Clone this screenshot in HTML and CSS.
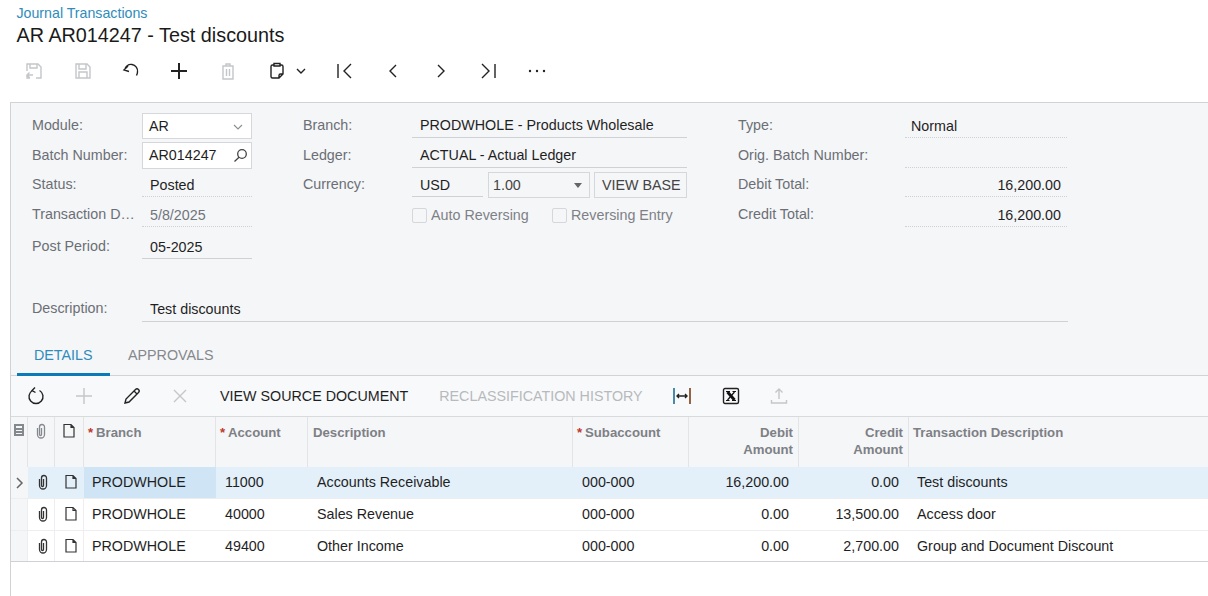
FILE: index.html
```html
<!DOCTYPE html>
<html lang="en">
<head>
<meta charset="utf-8">
<title>Journal Transactions</title>
<link rel="stylesheet" href="styles.css">
</head>
<body>
<header class="page-head">
  <a class="crumb">Journal Transactions</a>
  <h1 class="title">AR AR014247 - Test discounts</h1>
</header>
<nav class="toolbar">
  <span class="tool t1 off"><svg width="20" height="20" viewBox="0 0 20 20"><path d="M3 10V3h11l3 3v11h-5M6 3v4h7V3M3 14h6M5.500 11.500 3 14l2.500 2.500M3 14v3h3"/></svg></span>
  <span class="tool t2 off"><svg width="20" height="20" viewBox="0 0 20 20"><path d="M3 3h11l3 3v11H3zM6 3v5h7V3M6 17v-6h8v6"/></svg></span>
  <span class="tool t3"><svg width="20" height="20" viewBox="0 0 20 20"><path d="M7 5 3 9l5 1.500M3.500 9A6.500 6.500 0 0 1 16.500 11c0 1.500-.5 2.500-1 3.500"/></svg></span>
  <span class="tool t4"><svg width="20" height="20" viewBox="0 0 20 20"><path class="thick" d="M10 2v16M2 10h16"/></svg></span>
  <span class="tool t5 off"><svg width="20" height="20" viewBox="0 0 20 20"><path d="M5 5h10v13H5zM8 5V3h4v2M8.500 8v7M11.500 8v7"/></svg></span>
  <span class="tool t6"><svg width="20" height="20" viewBox="0 0 20 20"><path d="M6.500 4H5.500Q4 4 4 5.500v10Q4 17 5.500 17H12l4-4V5.500Q16 4 14.500 4h-1M7 2.500h6V5H7zM16 13h-2.500Q12 13 12 14.500V17"/></svg></span>
  <span class="tool t7"><svg width="12" height="12" viewBox="0 0 12 12"><path d="M2 4l4 4 4-4"/></svg></span>
  <span class="tool t8"><svg width="20" height="20" viewBox="0 0 20 20"><path d="M3 3v14M16 3l-7 7 7 7"/></svg></span>
  <span class="tool t9"><svg width="20" height="20" viewBox="0 0 20 20"><path d="M13 4l-6 6 6 6"/></svg></span>
  <span class="tool t10"><svg width="20" height="20" viewBox="0 0 20 20"><path d="M7 4l6 6-6 6"/></svg></span>
  <span class="tool t11"><svg width="20" height="20" viewBox="0 0 20 20"><path d="M3 3l7 7-7 7M16 3v14"/></svg></span>
  <span class="tool t12"><svg width="20" height="20" viewBox="0 0 20 20"><circle class="dot" cx="3" cy="10" r="1.200"/><circle class="dot" cx="10" cy="10" r="1.200"/><circle class="dot" cx="17" cy="10" r="1.200"/></svg></span>
</nav>
<main class="panel">
  <section class="form">
    <div class="col col-a">
      <div class="row r1"><span class="lbl">Module:</span><span class="box sel">AR<svg class="chev" width="10" height="10" viewBox="0 0 10 10"><path d="M1 3l4 4 4-4"/></svg></span></div>
      <div class="row r2"><span class="lbl">Batch Number:</span><span class="box sel">AR014247<svg class="mag" width="15" height="15" viewBox="0 0 15 15"><circle cx="9" cy="6" r="4.300"/><path d="M6 9.200 1.500 13.500"/></svg></span></div>
      <div class="row r3"><span class="lbl">Status:</span><span class="val dotted">Posted</span></div>
      <div class="row r4"><span class="lbl">Transaction D…</span><span class="val dotted muted">5/8/2025</span></div>
      <div class="row r5"><span class="lbl">Post Period:</span><span class="val line">05-2025</span></div>
    </div>
    <div class="col col-b">
      <div class="row r1"><span class="lbl">Branch:</span><span class="val line wide">PRODWHOLE - Products Wholesale</span></div>
      <div class="row r2"><span class="lbl">Ledger:</span><span class="val line wide">ACTUAL - Actual Ledger</span></div>
      <div class="row r3"><span class="lbl">Currency:</span>
        <div class="cur">
          <span class="val line usd">USD</span>
          <span class="box rate">1.00<i class="caret"></i></span>
          <span class="box btn">VIEW BASE</span>
        </div>
      </div>
      <div class="row r4"><span class="lbl"></span>
        <div class="checks">
          <label class="chk c-a"><i class="cb"></i>Auto Reversing</label>
          <label class="chk"><i class="cb"></i>Reversing Entry</label>
        </div>
      </div>
    </div>
    <div class="col col-c">
      <div class="row r1"><span class="lbl">Type:</span><span class="val dotted">Normal</span></div>
      <div class="row r2"><span class="lbl">Orig. Batch Number:</span><span class="val dotted"></span></div>
      <div class="row r3"><span class="lbl">Debit Total:</span><span class="val dotted num">16,200.00</span></div>
      <div class="row r4"><span class="lbl">Credit Total:</span><span class="val dotted num">16,200.00</span></div>
    </div>
  </section>
  <div class="desc"><span class="lbl">Description:</span><span class="val line">Test discounts</span></div>
  <div class="tabs"><span class="tab on">DETAILS</span><span class="tab">APPROVALS</span></div>
  <div class="gridbar">
    <span class="gt g1"><svg width="20" height="20" viewBox="0 0 20 20"><path d="M6.500 4.500A7 7 0 1 0 13.500 4.500M9 1.500l-3 3 3.500 2" /></svg></span>
    <span class="gt g2 off"><svg width="18" height="18" viewBox="0 0 18 18"><path d="M9 1v16M1 9h16"/></svg></span>
    <span class="gt g3"><svg width="18" height="18" viewBox="0 0 18 18"><path d="M2 16l1-4L12.500 2.500a1.500 1.500 0 0 1 3 3L6 15zM11 4l3 3"/></svg></span>
    <span class="gt g4 off"><svg width="16" height="16" viewBox="0 0 16 16"><path d="M2 2l12 12M14 2 2 14"/></svg></span>
    <span class="gbtn b1">VIEW SOURCE DOCUMENT</span>
    <span class="gbtn b2 dis">RECLASSIFICATION HISTORY</span>
    <span class="gt g5"><svg width="20" height="20" viewBox="0 0 20 20"><path class="blue" d="M2 2v16"/><path class="brown" d="M18 2v16"/><path d="M5 10h10M7 8l-2 2 2 2M13 8l2 2-2 2"/></svg></span>
    <span class="gt g6"><svg width="18" height="18" viewBox="0 0 18 18"><rect x="1.500" y="1.500" width="15" height="15" rx="1.500"/><path class="xthick" d="M5.500 5l7 8"/><path class="xthin" d="M12.500 5l-7 8M4 4.500h4M10.500 4.500H14M4 13.500h3.500M10 13.500h4"/></svg></span>
    <span class="gt g7 off"><svg width="18" height="18" viewBox="0 0 18 18"><path d="M9 12V2M5.500 5.500 9 2l3.500 3.500M1.500 13v3h15v-3"/></svg></span>
  </div>
  <div class="grid">
    <div class="tr head">
      <div class="th ic"><svg width="14" height="14" viewBox="0 0 14 14"><path class="fillgrey" d="M2 1h10v12H2zM4 3v2h6V3zM4 7v1h6V7zM4 10v1h6v-1z"/></svg></div>
      <div class="th ic"><svg width="14" height="16" viewBox="0 0 14 16"><path class="clipgrey" d="M3.500 5v6.500a3.500 3.500 0 0 0 7 0V4a2.500 2.500 0 0 0-5 0v7.500a1 1 0 0 0 2 0V5"/></svg></div>
      <div class="th ic"><svg width="14" height="16" viewBox="0 0 14 16"><path class="doc" d="M2 1.500h7l3 3v9.500H2zM9 1.500v3h3"/></svg></div>
      <div class="th"><b class="req">*</b>Branch</div>
      <div class="th"><b class="req">*</b>Account</div>
      <div class="th plain">Description</div>
      <div class="th"><b class="req">*</b>Subaccount</div>
      <div class="th rt">Debit<br>Amount</div>
      <div class="th rt">Credit<br>Amount</div>
      <div class="th">Transaction Description</div>
    </div>
    <div class="tr sel-row">
      <div class="td ic"><svg width="10" height="12" viewBox="0 0 10 12"><path class="arrow" d="M2 1l5 5-5 5"/></svg></div>
      <div class="td ic"><svg width="14" height="16" viewBox="0 0 14 16"><path class="clip" d="M3.500 5v6.500a3.500 3.500 0 0 0 7 0V4a2.500 2.500 0 0 0-5 0v7.500a1 1 0 0 0 2 0V5"/></svg></div>
      <div class="td ic"><svg width="14" height="16" viewBox="0 0 14 16"><path class="doc" d="M2 1.500h7l3 3v9.500H2zM9 1.500v3h3"/></svg></div>
      <div class="td active">PRODWHOLE</div>
      <div class="td">11000</div>
      <div class="td">Accounts Receivable</div>
      <div class="td">000-000</div>
      <div class="td rt">16,200.00</div>
      <div class="td rt">0.00</div>
      <div class="td">Test discounts</div>
    </div>
    <div class="tr">
      <div class="td ic"></div>
      <div class="td ic"><svg width="14" height="16" viewBox="0 0 14 16"><path class="clip" d="M3.500 5v6.500a3.500 3.500 0 0 0 7 0V4a2.500 2.500 0 0 0-5 0v7.500a1 1 0 0 0 2 0V5"/></svg></div>
      <div class="td ic"><svg width="14" height="16" viewBox="0 0 14 16"><path class="doc" d="M2 1.500h7l3 3v9.500H2zM9 1.500v3h3"/></svg></div>
      <div class="td">PRODWHOLE</div>
      <div class="td">40000</div>
      <div class="td">Sales Revenue</div>
      <div class="td">000-000</div>
      <div class="td rt">0.00</div>
      <div class="td rt">13,500.00</div>
      <div class="td">Access door</div>
    </div>
    <div class="tr last">
      <div class="td ic"></div>
      <div class="td ic"><svg width="14" height="16" viewBox="0 0 14 16"><path class="clip" d="M3.500 5v6.500a3.500 3.500 0 0 0 7 0V4a2.500 2.500 0 0 0-5 0v7.500a1 1 0 0 0 2 0V5"/></svg></div>
      <div class="td ic"><svg width="14" height="16" viewBox="0 0 14 16"><path class="doc" d="M2 1.500h7l3 3v9.500H2zM9 1.500v3h3"/></svg></div>
      <div class="td">PRODWHOLE</div>
      <div class="td">49400</div>
      <div class="td">Other Income</div>
      <div class="td">000-000</div>
      <div class="td rt">0.00</div>
      <div class="td rt">2,700.00</div>
      <div class="td">Group and Document Discount</div>
    </div>
  </div>
</main>
</body>
</html>
```
FILE: styles.css
```css
* { box-sizing: border-box; }
html, body { margin: 0; height: 596px; overflow: hidden; background: #fff; }
body { font: 14.3px/16px "Liberation Sans", Arial, sans-serif; color: #1f1f1f; }

.page-head { padding: 5px 0 0 16.500px; height: 52px; }
.crumb { display: block; color: #2f8cbc; font-size: 14.2px; line-height: 16px; }
.title { margin: 2px 0 0; font-size: 19.8px; line-height: 24px; font-weight: 400; color: #1a1a1a; }

.toolbar { display: flex; align-items: center; height: 38px; margin-bottom: 12px; padding-left: 24px; }
.tool { display: flex; width: 20px; height: 20px; align-items: center; justify-content: center; }
.tool svg, .gt svg { fill: none; stroke: #222; stroke-width: 1.4; }
.tool.off svg, .gt.off svg { stroke: #c4c6c9; }
.tool .thick { stroke-width: 2; }
.tool .dot { fill: #222; stroke: none; }
.t2 { margin-left: 29px; }
.t3, .t4 { margin-left: 28px; }
.t5, .t6 { margin-left: 29px; }
.t7 { margin-left: 8px; width: 12px; }
.t8 { margin-left: 28px; }
.t9 { margin-left: 28px; }
.t10, .t11, .t12 { margin-left: 28px; }

.panel { margin-left: 10px; height: 494px; border-top: 1px solid #d2d3d5; border-left: 1px solid #d2d3d5; background: #fff; display: flex; flex-direction: column; }

.form { display: flex; padding: 8px 0 0 21px; height: 188px; background: #f5f6f8; }
.col { display: flex; flex-direction: column; }
.col-a { width: 271px; }
.col-b { width: 435px; }
.col-c { width: 329px; }
.row { display: flex; }
.r1 { height: 30px; }
.r2 { height: 29px; }
.r3 { height: 30px; }
.r4 { height: 30px; }
.r5 { height: 32px; padding-top: 2px; }

.lbl { flex: none; width: 110px; padding-top: 6px; color: #6b6f75; white-space: nowrap; }
.col-b .lbl { width: 109px; }
.col-c .lbl { width: 167px; }

.box { display: flex; align-items: center; position: relative; height: 26px; border: 1px solid #d5d7da; background: #fff; padding-left: 6px; margin-top: 2px; padding-bottom: 1px; color: #1f1f1f; }
.sel { width: 110px; }
.r2 .sel { height: 27px; margin-top: 1px; }
.chev { position: absolute; right: 8px; top: 8px; fill: none; stroke: #8a8d91; stroke-width: 1.1; }
.mag { position: absolute; right: 3px; top: 5px; fill: none; stroke: #444; stroke-width: 1.3; }

.val { display: block; width: 110px; height: 26px; padding: 6px 0 0 8px; margin-top: 1px; border-bottom: 1px solid transparent; color: #1f1f1f; white-space: nowrap; }
.val.line { border-bottom-color: #cfd1d4; }
.val.dotted { border-bottom: 1px dotted #cfd1d4; }
.val.muted { color: #70757b; }
.val.wide { width: 275px; height: 27px; }
.col-c .val { width: 162px; padding-left: 6px; }
.val.num { text-align: right; padding-right: 6px; }
.col-b .r1 .val, .col-b .r2 .val { margin-top: 0; }

.cur { display: flex; }
.usd { width: 71px; padding-left: 8px; }
.rate { width: 102px; margin-left: 5px; padding-left: 4px; background: #f5f6f8; color: #444; }
.caret { position: absolute; right: 7px; top: 10px; width: 0; height: 0; border: 4.500px solid transparent; border-top: 5px solid #666; border-bottom: 0; }
.btn { width: 93px; margin-left: 4px; padding-left: 7px; background: #f5f6f8; color: #444; }

.checks { display: flex; padding-top: 7px; color: #7d8186; }
.chk { display: flex; align-items: center; height: 16px; }
.c-a { width: 140px; }
.cb { width: 15px; height: 15px; margin-right: 4px; border: 1px solid #d5d7da; border-radius: 2px; background: #f5f6f8; }

.desc { display: flex; padding: 0 0 0 21px; height: 32px; background: #f5f6f8; }
.desc .lbl { padding-top: 9px; }
.desc .val { width: 926px; height: 31px; margin-top: 0; padding-top: 10px; }

.tabs { display: flex; height: 53px; padding: 0 0 0 6px; background: #f5f6f8; border-bottom: 1px solid #d2d3d5; align-items: stretch; }
.tab { padding-top: 24px; color: #85888d; }
.tab.on { width: 93px; padding-left: 17px; color: #2f8cbc; border-bottom: 3px solid #0a7ab8; margin-bottom: -1px; }
.tab:not(.on) { margin-left: 18px; }

.gridbar { display: flex; align-items: center; height: 41px; background: #f8f9fa; border-bottom: 1px solid #d9dadc; }
.gt { display: flex; align-items: center; justify-content: center; width: 20px; height: 20px; }
.gbtn { white-space: nowrap; }
.gbtn.dis { color: #b7babd; }
.g1 { margin-left: 15px; }
.g2 { margin-left: 28px; }
.g3 { margin-left: 28px; }
.g4 { margin-left: 28px; }
.b1 { margin-left: 30px; }
.b2 { margin-left: 31px; }
.g5 { margin-left: 29px; }
.g6 { margin-left: 29px; }
.g7 { margin-left: 28px; }
.gt .blue { stroke: #1c6f94; stroke-width: 1.6; }
.gt .brown { stroke: #7a3e16; stroke-width: 1.6; }
.gt .xthick { stroke: #111; stroke-width: 3; }
.gt .xthin { stroke: #111; stroke-width: 1.2; }

.grid { display: flex; flex-direction: column; }
.tr { display: grid; grid-template-columns: 17px 27px 29px 132px 92px 265px 116px 110px 110px 1fr; height: 32px; background: #fff; border-bottom: 1px solid #eceef0; }
.tr.last { height: 31px; border-bottom-color: #cfd1d4; }
.tr.head { height: 50px; background: #f5f6f8; border-bottom: 0; }
.th { padding: 7px 5px 0 7px; font-size: 13.2px; font-weight: 700; line-height: 17px; color: #7d8085; border-right: 1px solid #e2e4e6; white-space: nowrap; }
.th.ic { padding: 6px 0 0; text-align: center; }
.th.plain { padding-left: 5px; }
.th:last-child { padding-left: 4px; border-right: 0; }
.rt { text-align: right; }
.req { display: inline-block; width: 8px; color: #c0392b; font-weight: 700; margin-left: -3px; }
.td { padding: 7px 10px 0 8px; line-height: 16px; white-space: nowrap; }
.td:nth-child(n+5) { padding-left: 9px; }
.td:last-child { padding-left: 8px; }
.td.ic { padding: 7px 0 0 3px; text-align: center; border-right: 1px solid #eceef0; background: #fff; }
.td.active { background: #cfe4f5; }
.td.ic:first-child { background: #f5f6f8; padding: 9px 0 0; }
.sel-row { background: #e3f0fa; }
.sel-row .td.ic { background: #e3f0fa; border-right: 0; }
.sel-row .td.ic:first-child { background: #f5f6f8; }
.tr svg { fill: none; stroke: #333; stroke-width: 1.2; }
.tr .clip { stroke-width: 1.3; stroke: #333; }
.tr .clipgrey { stroke: #85888d; stroke-width: 1.3; }
.tr .fillgrey { fill: #85888d; stroke: none; fill-rule: evenodd; }
.tr .arrow { stroke: #666; stroke-width: 1.5; }
```
